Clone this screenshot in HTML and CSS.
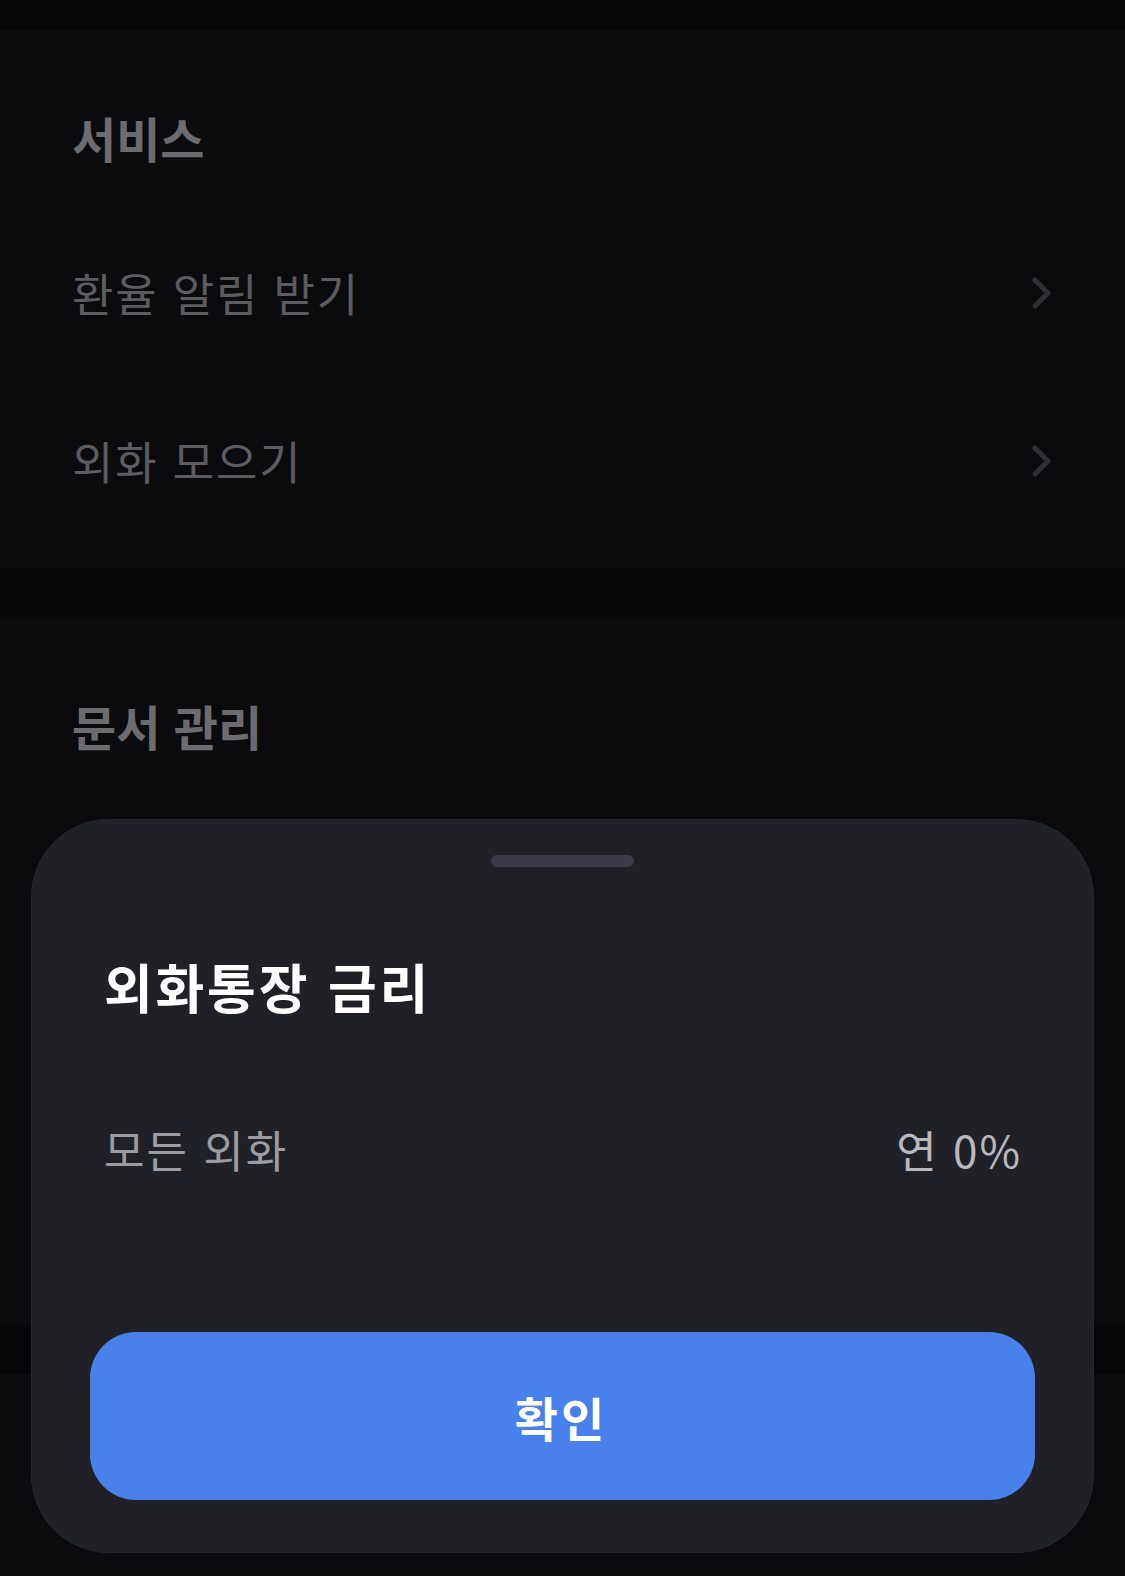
FILE: index.html
```html
<!DOCTYPE html>
<html lang="ko">
<head>
<meta charset="utf-8">
<link rel="stylesheet" href="styles.css">
</head>
<body>
<div class="page">
  <div class="topbar"></div>
  <section class="section s1">
    <h2 class="sec-title">서비스</h2>
    <div class="row"><span class="row-label">환율 알림 받기</span>
      <svg class="chev" width="19" height="32" viewBox="0 0 19 32"><path d="M3 3 L16 16 L3 29" fill="none" stroke="#2e2e33" stroke-width="5" stroke-linecap="round" stroke-linejoin="round"/></svg>
    </div>
    <div class="row"><span class="row-label">외화 모으기</span>
      <svg class="chev" width="19" height="32" viewBox="0 0 19 32"><path d="M3 3 L16 16 L3 29" fill="none" stroke="#2e2e33" stroke-width="5" stroke-linecap="round" stroke-linejoin="round"/></svg>
    </div>
  </section>
  <div class="gap"></div>
  <section class="section s2">
    <h2 class="sec-title">문서 관리</h2>
  </section>
  <div class="gap"></div>
  <section class="section s3"></section>

  <div class="sheet">
    <div class="handle"></div>
    <h1 class="sheet-title">외화통장 금리</h1>
    <div class="rate-row">
      <span class="rate-label">모든 외화</span>
      <span class="rate-value">연 0%</span>
    </div>
    <button class="confirm">확인</button>
  </div>
</div>
</body>
</html>
```
FILE: styles.css
```css
* { box-sizing: border-box; }
html, body { margin: 0; padding: 0; }
body {
  background: #060608;
  font-family: "Noto Sans CJK KR", "Noto Sans", sans-serif;
  width: 1125px;
  height: 1576px;
  overflow: hidden;
}
.page {
  position: relative;
  width: 1125px;
  height: 1576px;
  display: flex;
  flex-direction: column;
}
.topbar { height: 30px; background: #060608; }
.section { background: #0b0b0d; }
.gap { background: #060608; height: 49px; }
.s1 { height: 538px; padding: 77px 0 0 0; }
.s2 { height: 708px; padding: 78px 0 0 0; }
.s3 { flex: 1; }
.sec-title {
  margin: 0;
  padding-left: 72px;
  font-size: 48px;
  line-height: 60px;
  font-weight: 700;
  color: #6c6c70;
  letter-spacing: 0;
}
.s1 .sec-title { margin-bottom: 42px; }
.row {
  height: 168px;
  display: flex;
  align-items: center;
  justify-content: space-between;
  padding: 0 74px 0 72px;
}
.row-label {
  font-size: 45px;
  line-height: 60px;
  color: #5b5b60;
  letter-spacing: 1.8px;
}
.chev { display: block; }

.sheet {
  position: absolute;
  left: 31px;
  right: 31px;
  top: 819px;
  height: 734px;
  background: #202127;
  border: 1px solid #26272d;
  border-radius: 78px;
  display: flex;
  flex-direction: column;
  padding: 35px 58px 0 58px;
}
.handle {
  align-self: center;
  width: 143px;
  height: 12px;
  border-radius: 6px;
  background: #3b3c47;
}
.sheet-title {
  margin: 89px 0 0 14px;
  font-size: 53px;
  line-height: 60px;
  font-weight: 700;
  color: #ffffff;
  letter-spacing: 2.8px;
}
.rate-row {
  margin: 103px 13px 0 14px;
  display: flex;
  justify-content: space-between;
  align-items: center;
  font-size: 44px;
  line-height: 60px;
  letter-spacing: 2px;
}
.rate-label { color: #9c9ca3; }
.rate-value { color: #b8b8be; }
.confirm {
  margin-top: 153px;
  height: 168px;
  width: 100%;
  border: none;
  border-radius: 46px;
  background: #4881eb;
  color: #ffffff;
  font-family: "Noto Sans CJK KR", "Noto Sans", sans-serif;
  font-size: 47px;
  font-weight: 700;
  letter-spacing: 3px;
  padding-left: 3px;
}
```
